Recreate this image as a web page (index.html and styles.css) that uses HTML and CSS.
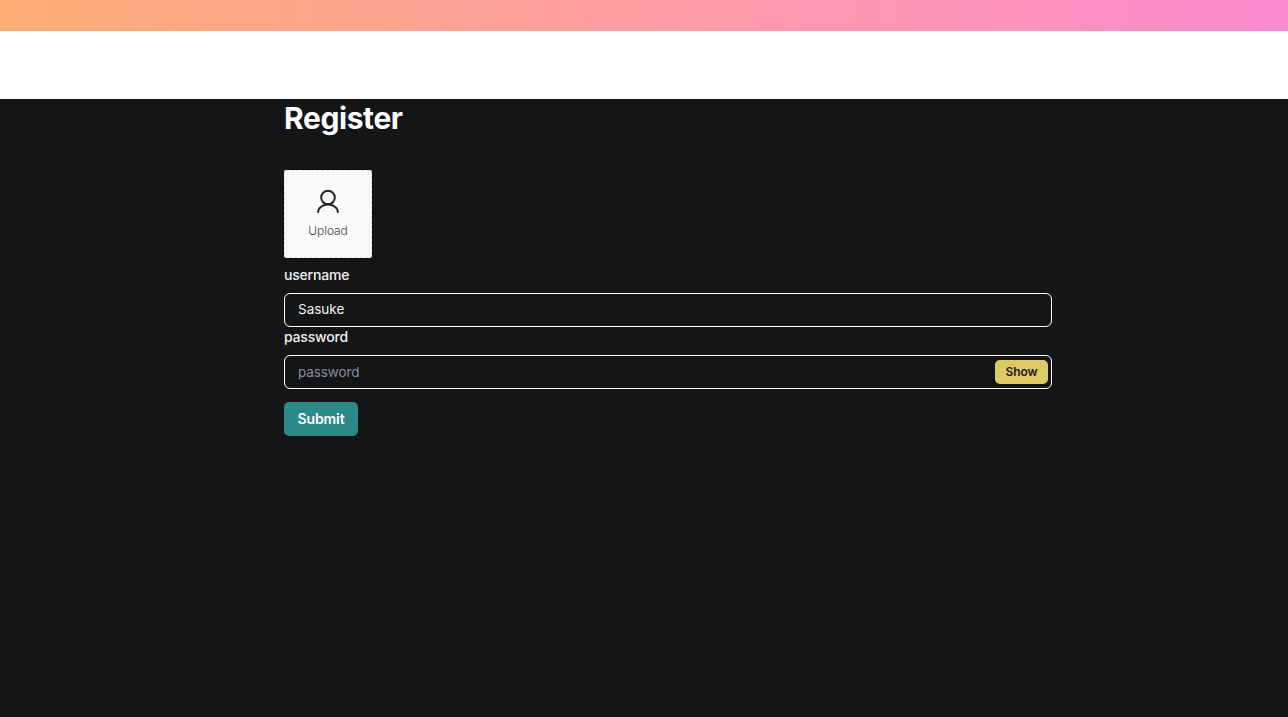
FILE: index.html
```html
<!DOCTYPE html>
<html lang="en">
<head>
<meta charset="utf-8">
<title>Register</title>
<link rel="stylesheet" href="styles.css">
</head>
<body>
<div class="banner"></div>
<header class="nav"></header>
<main class="content">
  <h1 class="title">Register</h1>
  <form class="form">
    <div class="upload">
      <svg class="upload-icon" viewBox="0 0 28 28" width="28" height="28" fill="none" stroke="#262626" stroke-width="2" stroke-linecap="round" stroke-linejoin="round">
        <circle cx="14" cy="10.5" r="6.8"></circle>
        <path d="M4.2 25a9.8 7.5 0 0 1 19.6 0"></path>
      </svg>
      <span class="upload-text">Upload</span>
    </div>
    <label class="label">username</label>
    <div class="field"><input class="input" type="text" value="Sasuke"></div>
    <label class="label label-second">password</label>
    <div class="field">
      <input class="input input-password" type="password" placeholder="password">
      <button class="show" type="button">Show</button>
    </div>
    <button class="submit" type="button">Submit</button>
  </form>
</main>
</body>
</html>
```
FILE: styles.css
```css
* { box-sizing: border-box; }
html, body { margin: 0; height: 100%; }
body {
  background: #141517;
  color: #fff;
  font-family: Inter, "Liberation Sans", sans-serif;
  display: flex;
  flex-direction: column;
  min-height: 717px;
}
.banner {
  height: 31px;
  background: linear-gradient(90deg, #fdae74, #fa8bd0);
}
.nav { height: 68px; background: #fff; }
.content { width: 768px; margin-left: 284px; }
.title {
  margin: 0;
  padding-top: 1px;
  font-size: 30px;
  line-height: 36px;
  font-weight: 700;
  letter-spacing: -0.4px;
  height: 71px;
}
.form { display: flex; flex-direction: column; align-items: stretch; }
.upload {
  width: 88px;
  height: 88px;
  background: #fafafa;
  border: 1px dashed #d9d9d9;
  border-radius: 2px;
  display: flex;
  flex-direction: column;
  align-items: center;
  color: #454545;
}
.upload-icon { margin-top: 16px; }
.upload-text { margin-top: 6px; font-size: 12px; line-height: 20px; font-weight: 300; letter-spacing: -0.05px; }
.label {
  margin-top: 7px;
  height: 28px;
  color: #f0f0f0;
  font-size: 14px;
  line-height: 20px;
  font-weight: 500;
  letter-spacing: -0.2px;
}
.label-second { margin-top: 0; }
.field { position: relative; height: 34px; }
.input {
  display: block;
  width: 100%;
  height: 34px;
  padding: 0 13px 2px;
  background: transparent;
  border: 1px solid #fff;
  border-radius: 6px;
  color: #f2f2f2;
  font: 400 13.5px/20px Inter, "Liberation Sans", sans-serif;
  outline: none;
}
.input-password { padding-bottom: 0; }
.input::placeholder { color: #858fa0; opacity: 1; letter-spacing: -0.1px; }
.show {
  position: absolute;
  right: 4px;
  top: 5px;
  width: 53px;
  height: 24px;
  padding: 0;
  border: 0;
  border-radius: 5px;
  background: #ddc967;
  color: #1a1a1a;
  font: 600 12px/16px Inter, "Liberation Sans", sans-serif;
  letter-spacing: -0.1px;
}
.submit {
  margin-top: 13px;
  width: 74px;
  height: 34px;
  padding: 0;
  border: 0;
  border-radius: 5px;
  background: #2b8a88;
  color: #fff;
  font: 600 14px/20px Inter, "Liberation Sans", sans-serif;
  letter-spacing: -0.1px;
}
```
